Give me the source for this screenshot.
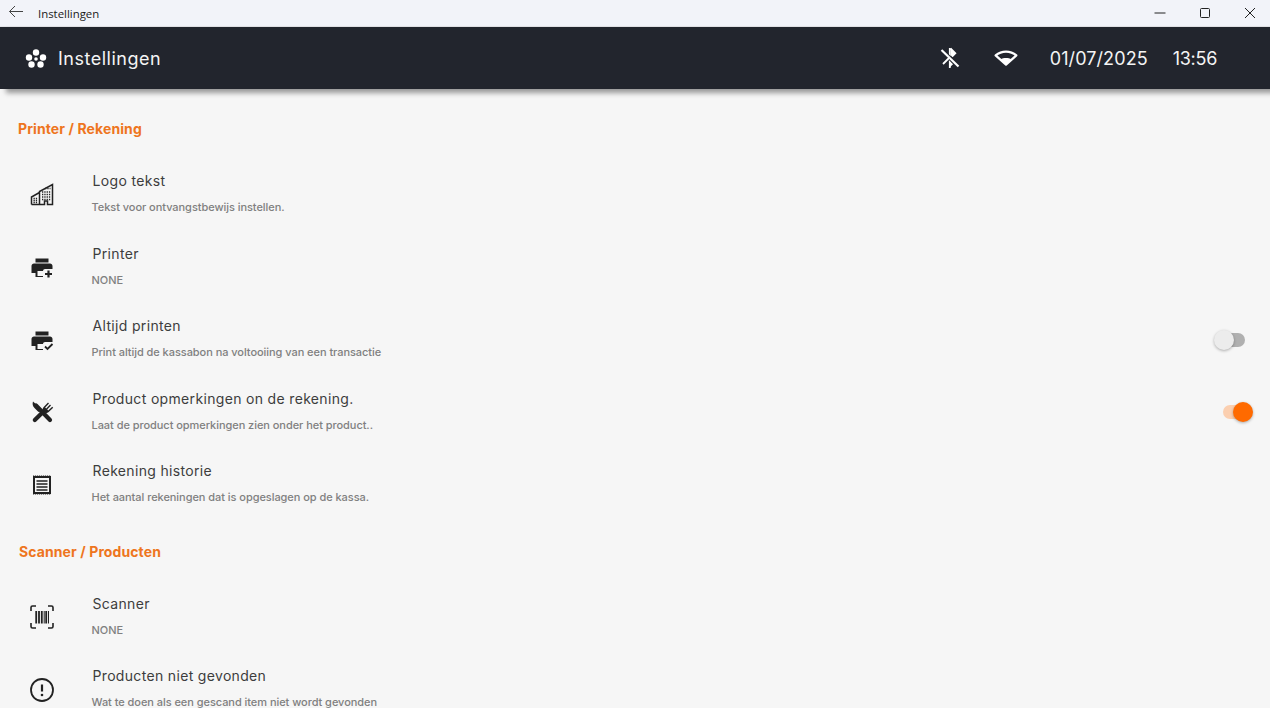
<div class="page">
  <div class="titlebar">
    <svg class="back" width="16" height="14" viewBox="0 0 16 14" fill="none" stroke="#444" stroke-width="1"><path d="M15 6.500H1.500M7 1 1.500 6.500 7 12" /></svg>
    <span class="wintitle">Instellingen</span>
    <div class="controls">
      <span class="ctrl"><svg width="12" height="12" viewBox="0 0 12 12" stroke="#222" fill="none"><path d="M.5 6h11" /></svg></span>
      <span class="ctrl"><svg width="12" height="12" viewBox="0 0 12 12" stroke="#222" fill="none"><rect x="1.500" y="1.500" width="9" height="9" rx="1" /></svg></span>
      <span class="ctrl"><svg width="12" height="12" viewBox="0 0 12 12" stroke="#222" fill="none"><path d="M1 1l10 10M11 1 1 11" /></svg></span>
    </div>
  </div>

  <header class="appbar">
    <svg class="logo" width="22" height="20" viewBox="0 0 22 20" fill="#fff">
      <circle cx="11" cy="4.500" r="3.200" /><circle cx="4" cy="9.500" r="3.200" /><circle cx="18" cy="9.500" r="3.200" /><circle cx="6.500" cy="16.500" r="3.200" /><circle cx="15.500" cy="16.500" r="3.200" /><circle cx="11" cy="11" r="1.800" />
    </svg>
    <h1>Instellingen</h1>
    <div class="status">
      <svg class="bt" width="24" height="24" viewBox="0 0 24 24"><path d="M12.500 2.500l4.800 4.800-3.300 3.300-1.500-1.500z M11.200 14l1.800 1.800 2.200 2.200-4 4z" fill="#fff" /><path d="M11.800 2v20" stroke="#fff" stroke-width="1.800" /><path d="M12.500 2.500l4.800 4.800-3.300 3.300" fill="none" stroke="#fff" stroke-width="1.800" /><path d="M4 4.500 20.500 20.500" stroke="#22252d" stroke-width="4.200" /><path d="M3.500 4 20.500 20.500" stroke="#fff" stroke-width="2.200" /><path d="M5 18l6-6" stroke="#fff" stroke-width="1.800" /></svg>
      <svg class="wifi" width="24" height="16" viewBox="0 0 24 16"><path d="M1.600 5.400C4.500 3 8 1.600 12 1.600s7.500 1.400 10.400 3.800L12 14.600z" fill="none" stroke="#fff" stroke-width="2.200" stroke-linejoin="round" /><path d="M6.500 9.400C8 8.500 10 8 12 8s4 .5 5.500 1.400L12 15z" fill="#fff" /></svg>
      <span class="date">01/07/2025</span>
      <span class="time">13:56</span>
    </div>
  </header>

  <main>
    <h2 class="first">Printer / Rekening</h2>

    <div class="row">
      <svg class="ico" viewBox="0 0 24 24" fill="none" stroke="#222" stroke-width="1.500"><path d="M9.500 21.500V8.500L22.500 1.500v20h-5V18h-3v3.500zM1.500 21.500V14l8-4.500M1.500 21.500h8" /><path d="M3.500 15.500h4M3.500 17.500h4M3.500 19.500h4M12 9h8.500M12 11.500h8.500M12 14h8.500M12 16.500h8.500M15 5.500h5.500" stroke-dasharray="1.300 1" /></svg>
      <div class="text"><div class="title">Logo tekst</div><div class="sub">Tekst voor ontvangstbewijs instellen.</div></div>
    </div>

    <div class="row">
      <svg class="ico" viewBox="0 0 24 24" fill="#222"><path d="M5.500 3.500h13v4h-13z" /><path d="M4 8.500h16c1.400 0 2.500 1.100 2.500 2.500v3H15c-1 0-2 .7-2 2H7.500v5h5.500v1H5.500v-4H1.500V11C1.500 9.600 2.600 8.500 4 8.500z" /><path d="M18.500 15.500v7M15 19h7" fill="none" stroke="#222" stroke-width="2.200" /></svg>
      <div class="text"><div class="title">Printer</div><div class="sub">NONE</div></div>
    </div>

    <div class="row">
      <svg class="ico" viewBox="0 0 24 24" fill="#222"><path d="M5.500 3.500h13v4h-13z" /><path d="M4 8.500h16c1.400 0 2.500 1.100 2.500 2.500v3H15c-1 0-2 .7-2 2H7.500v5h5.500v1H5.500v-4H1.500V11C1.500 9.600 2.600 8.500 4 8.500z" /><path d="M15 18.500l2.500 2.500 5-5" fill="none" stroke="#222" stroke-width="1.800" /></svg>
      <div class="text"><div class="title">Altijd printen</div><div class="sub">Print altijd de kassabon na voltooiing van een transactie</div></div>
      <span class="switch"><i class="track"></i><i class="thumb"></i></span>
    </div>

    <div class="row">
      <svg class="ico" viewBox="0 0 24 24" fill="none" stroke="#222" stroke-linecap="round"><path d="M3 1.500c-.8 2.500-.3 4.500 1.500 6.500l4 4 3-3z" fill="#222" stroke="none" /><path d="M6 5.500 20 20" stroke-width="4.200" /><path d="M4.800 20 13.500 11.500" stroke-width="4.200" /><path d="M12.500 10c0-1.200.5-2.200 1.200-3l4.300-4.500 1 1-3.800 4 1 1 3.800-4 1 1-3.800 4 1 1 4-3.800 1 1-4.500 4.300c-.8.700-1.800 1.200-3 1.200z" fill="#222" stroke="none" /></svg>
      <div class="text"><div class="title">Product opmerkingen on de rekening.</div><div class="sub">Laat de product opmerkingen zien onder het product..</div></div>
      <span class="switch on"><i class="track"></i><i class="thumb"></i></span>
    </div>

    <div class="row">
      <svg class="ico" viewBox="0 0 24 24" fill="none" stroke="#222"><path d="M4 4h16v16H4z" stroke-width="2" /><path d="M6.500 8h11M6.500 11h11M6.500 14h11M6.500 17h11" stroke-width="1.600" /><path d="M3 3h18M3 21h18" stroke-width="1.200" stroke-dasharray="1.200 .8" /></svg>
      <div class="text"><div class="title">Rekening historie</div><div class="sub">Het aantal rekeningen dat is opgeslagen op de kassa.</div></div>
    </div>

    <h2>Scanner / Producten</h2>

    <div class="row">
      <svg class="ico" viewBox="0 0 24 24" fill="none" stroke="#222" stroke-width="1.600"><path d="M1 6V2.500c0-.8.700-1.500 1.500-1.500H6M18 1h3.500c.8 0 1.500.7 1.500 1.500V6M1 18v3.500c0 .8.700 1.500 1.500 1.500H6M18 23h3.500c.8 0 1.500-.7 1.500-1.500V18" /><path d="M6.200 6v12.500M9 6v12.500M11.800 6v12.500M16.200 6v12.500" stroke-width="1.800" /><path d="M14.200 6v12.500M18.500 6v12.500" stroke-width="1" /></svg>
      <div class="text"><div class="title">Scanner</div><div class="sub">NONE</div></div>
    </div>

    <div class="row">
      <svg class="ico" viewBox="0 0 24 24" fill="none" stroke="#222"><circle cx="12" cy="12" r="11" stroke-width="1.800" /><path d="M12 6.500v7" stroke-width="2.200" /><circle cx="12" cy="17" r="1.300" fill="#222" stroke="none" /></svg>
      <div class="text"><div class="title">Producten niet gevonden</div><div class="sub">Wat te doen als een gescand item niet wordt gevonden</div></div>
    </div>
  </main>
</div>

<style>
  :global(body) { margin: 0; background: #f6f6f6; }
  .page { height: 708px; overflow: hidden; font-family: Inter, "Liberation Sans", sans-serif; background: #f6f6f6; }

  .titlebar { height: 27px; display: flex; align-items: center; background: #f2f3f9; box-sizing: border-box; padding-left: 8px; border-bottom: 1px solid #e4e4e8; overflow: hidden; }
  .back { margin-top: -2px; }
  .wintitle { margin-left: 14px; font: 11.4px "Open Sans", sans-serif; color: #1a1a1a; }
  .controls { margin-left: auto; margin-right: -2px; display: flex; }
  .ctrl { width: 45px; height: 26px; display: flex; align-items: center; justify-content: center; }

  .appbar { position: relative; height: 62px; display: flex; align-items: center; padding: 0 53px 0 25px; background: #22252d; color: #f4f4f4; box-shadow: 6px 4px 5px rgba(0, 0, 0, .38); }
  .logo { flex: none; }
  h1 { margin: 0 0 0 11px; font-size: 18px; font-weight: 400; letter-spacing: .5px; }
  .status { margin-left: auto; display: flex; align-items: center; font-size: 18px; font-weight: 400; }
  .bt { margin-right: 32px; }
  .wifi { margin-right: 32px; }
  .date { margin-right: 25px; letter-spacing: .1px; }
  .time { letter-spacing: -.3px; }

  main { padding-top: 30px; }
  h2 { margin: 0; padding: 20.5px 0 0 19px; height: 60px; box-sizing: border-box; font-size: 14px; line-height: 20px; font-weight: 700; color: #ee7520; letter-spacing: .1px; }
  h2.first { padding-left: 18px; height: 39.5px; padding-top: 0; }

  .row { height: 72.5px; display: flex; align-items: center; padding: 0 16px 0 30px; box-sizing: border-box; }
  .ico { width: 24px; height: 24px; flex: none; }
  .text { margin-left: 38.5px; flex: 1; margin-top: -3px; }
  .title { font-size: 14px; line-height: 20px; color: #3d3d3d; letter-spacing: .33px; }
  .sub { margin-top: 8px; margin-left: -1px; font-size: 11px; line-height: 16px; font-weight: 500; color: #808080; letter-spacing: -.05px; }

  .switch { position: relative; width: 40px; height: 20px; flex: none; }
  .track { position: absolute; left: 9px; right: 9px; top: 3px; height: 14px; border-radius: 7px; background: #b0b0b0; }
  .thumb { position: absolute; left: 0; top: 0; width: 20px; height: 20px; border-radius: 50%; background: #ececec; box-shadow: 0 1px 3px rgba(0, 0, 0, .3); }
  .on .track { background: #fbcfb0; }
  .on .thumb { left: 19px; background: #ff6a00; }
</style>
